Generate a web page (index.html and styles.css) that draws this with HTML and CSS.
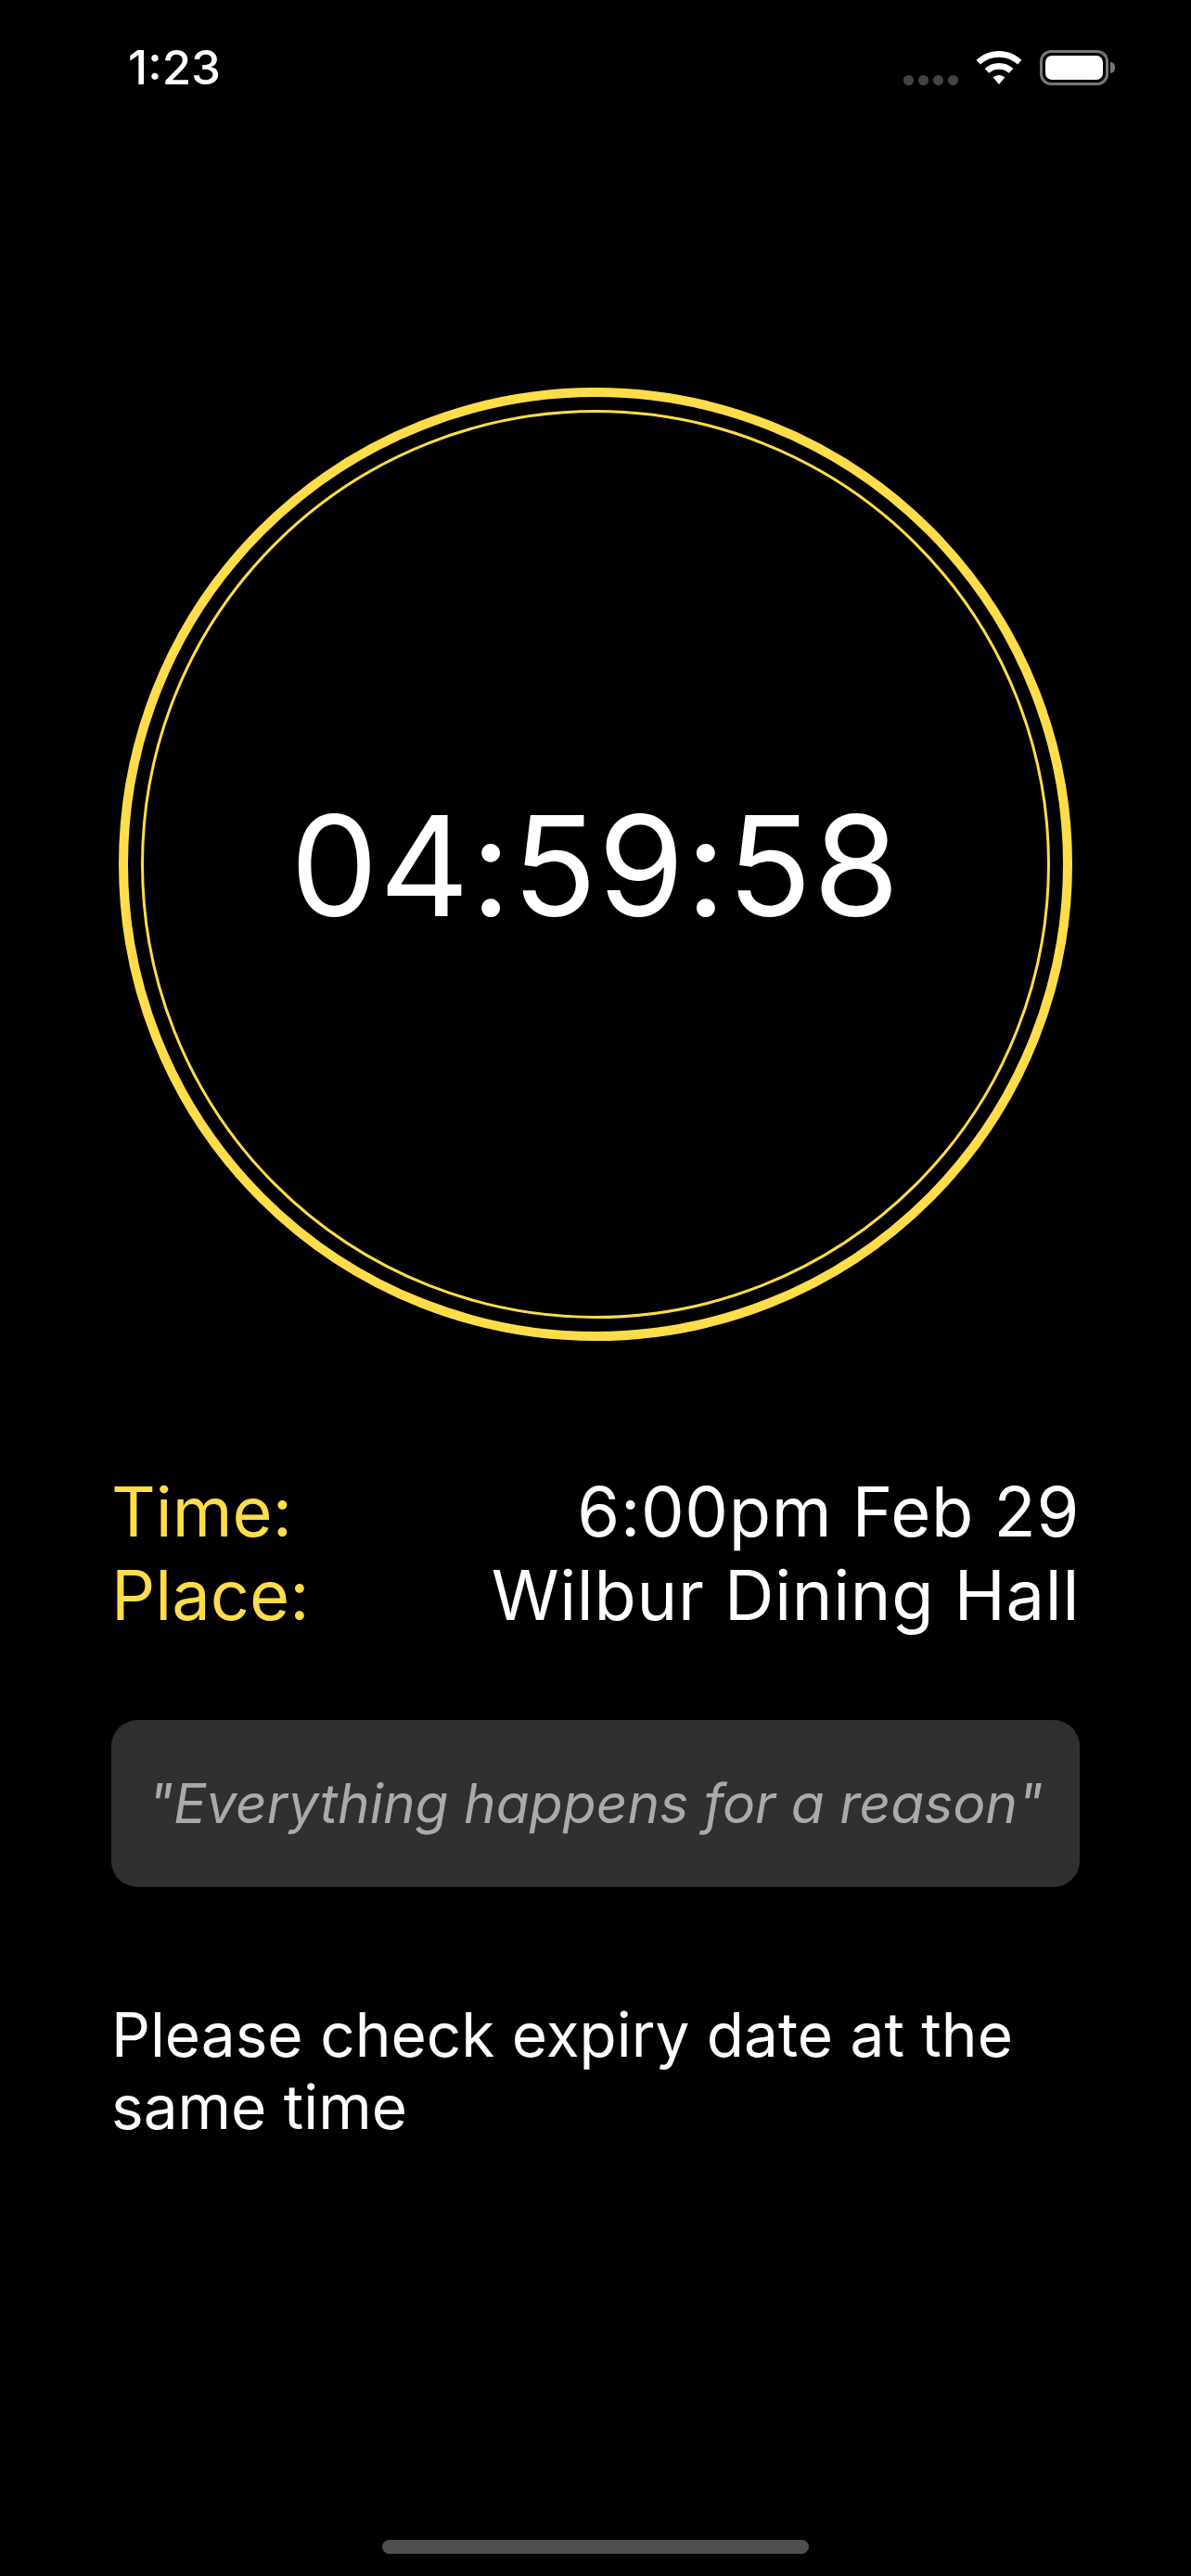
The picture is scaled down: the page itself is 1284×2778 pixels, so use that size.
FILE: index.html
```html
<!DOCTYPE html>
<html lang="en">
<head>
  <meta charset="UTF-8">
  <title>Timer</title>
  <link rel="stylesheet" href="styles.css">
</head>
<body>

  <div class="status-bar">
    <span class="status-time">1:23</span>
    <div class="status-icons">
      <div class="signal">
        <span></span><span></span><span></span><span></span>
      </div>
      <svg class="wifi" width="50" height="37" viewBox="0 0 50 37">
        <path d="M25 0C15.500 0 7 3.700 0.500 9.800L5 14.600C10.200 9.800 17.200 6.800 25 6.800C32.800 6.800 39.800 9.800 45 14.600L49.500 9.800C43 3.700 34.500 0 25 0Z" fill="#fff"/>
        <path d="M25 13C19 13 13.700 15.300 9.600 19L14.200 23.800C17 21.300 20.800 19.700 25 19.700C29.200 19.700 33 21.300 35.800 23.800L40.400 19C36.300 15.300 31 13 25 13Z" fill="#fff"/>
        <path d="M25 26C22.500 26 20.400 26.900 18.700 28.400L25 36L31.300 28.400C29.600 26.900 27.500 26 25 26Z" fill="#fff"/>
      </svg>
      <div class="battery">
        <div class="battery-body"><div class="battery-level"></div></div>
        <div class="battery-cap"></div>
      </div>
    </div>
  </div>

  <div class="timer-wrap">
    <div class="ring-outer">
      <div class="ring-inner">
        <span class="countdown">04:59:58</span>
      </div>
    </div>
  </div>

  <div class="details">
    <div class="detail-row">
      <span class="detail-label">Time:</span>
      <span class="detail-value">6:00pm Feb 29</span>
    </div>
    <div class="detail-row">
      <span class="detail-label">Place:</span>
      <span class="detail-value">Wilbur Dining Hall</span>
    </div>
  </div>

  <div class="quote">"Everything happens for a reason"</div>

  <p class="note">Please check expiry date at the same time</p>

  <div class="home-bar"></div>

</body>
</html>
```

FILE: styles.css
```css
* {
  box-sizing: border-box;
}

html, body {
  height: 100%;
}

body {
  margin: 0;
  background: #000;
  color: #fff;
  font-family: Inter, "Liberation Sans", sans-serif;
  display: flex;
  flex-direction: column;
}

.status-bar {
  height: 100px;
  padding: 46px 82px 0 138px;
  display: flex;
  justify-content: space-between;
  align-items: flex-start;
}

.status-time {
  font-size: 51px;
  line-height: 54px;
  font-weight: 500;
}

.status-icons {
  display: flex;
  align-items: flex-end;
  gap: 19px;
  height: 46px;
}

.signal {
  display: flex;
  gap: 5px;
}

.signal span {
  width: 11px;
  height: 11px;
  border-radius: 50%;
  background: #444;
}

.wifi {
  display: block;
}

.battery {
  display: flex;
  align-items: center;
  gap: 2px;
}

.battery-body {
  width: 74px;
  height: 38px;
  border: 3px solid #777;
  border-radius: 12px;
  padding: 3px;
}

.battery-level {
  height: 100%;
  background: #fff;
  border-radius: 7px;
}

.battery-cap {
  width: 5px;
  height: 12px;
  background: #777;
  border-radius: 0 5px 5px 0;
}

.timer-wrap {
  margin-top: 318px;
  display: flex;
  justify-content: center;
}

.ring-outer {
  width: 1028px;
  height: 1028px;
  border: 10px solid #ffdd4a;
  border-radius: 50%;
  padding: 14px;
}

.ring-inner {
  width: 100%;
  height: 100%;
  border: 3px solid #ffdd4a;
  border-radius: 50%;
  display: flex;
  align-items: center;
  justify-content: center;
}

.countdown {
  font-size: 150px;
  line-height: 1;
  letter-spacing: 1.5px;
  padding-top: 4px;
}

.details {
  margin-top: 139px;
  padding: 0 120px;
  font-size: 74px;
  line-height: 90px;
}

.detail-row {
  display: flex;
  justify-content: space-between;
}

.detail-label {
  color: #ffdd4a;
}

.detail-value {
  letter-spacing: 0.7px;
}

.quote {
  margin: 90px 120px 0;
  height: 180px;
  background: #303030;
  border-radius: 28px;
  color: #aaa;
  font-size: 58.7px;
  font-style: italic;
  padding-bottom: 2px;
  display: flex;
  align-items: center;
  justify-content: center;
  white-space: nowrap;
}

.note {
  margin: 120px 120px 0;
  font-size: 65.7px;
  line-height: 78px;
}

.home-bar {
  margin: auto auto 24px;
  width: 460px;
  height: 15px;
  border-radius: 8px;
  background: #4f4f4f;
}
```
